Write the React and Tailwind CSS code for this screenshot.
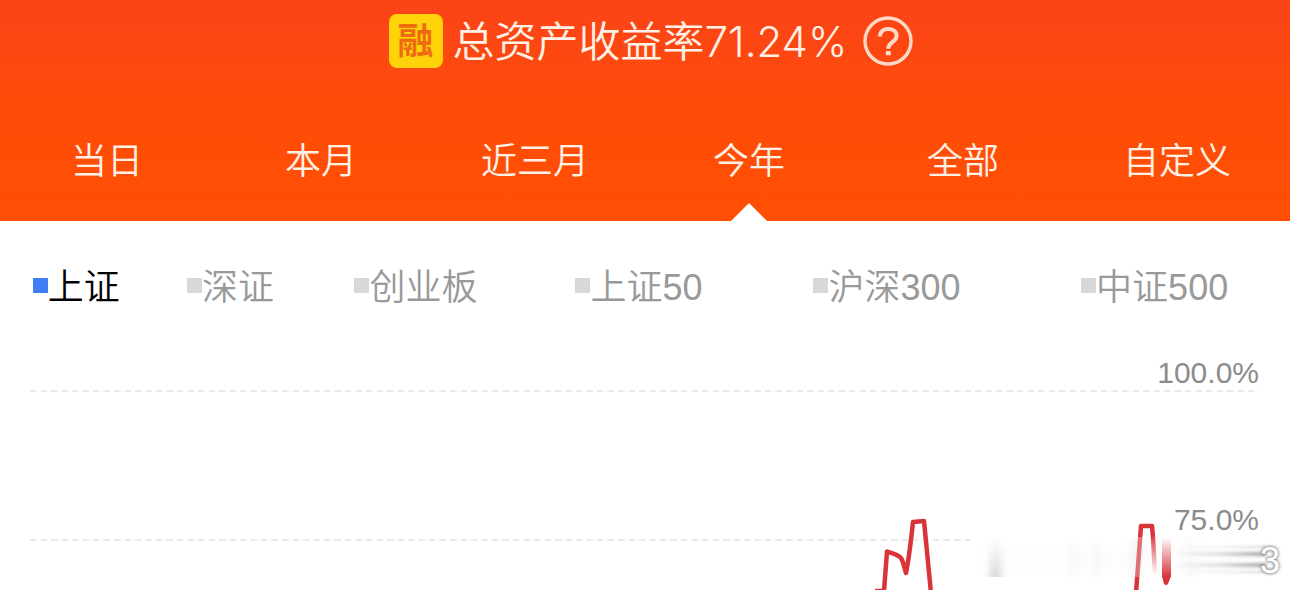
import { useState } from 'react';

const periods = ['当日', '本月', '近三月', '今年', '全部', '自定义'];

// Longer names take a larger share of the row
const indexes = [
  { name: '上证', grow: 'grow-[65]' },
  { name: '深证', grow: 'grow-[69]' },
  { name: '创业板', grow: 'grow-[91]' },
  { name: '上证50', grow: 'grow-[104]' },
  { name: '沪深300', grow: 'grow-[117]' },
  { name: '中证500', grow: 'grow-[123]' },
];

function HelpIcon() {
  return (
    <svg className="w-[50px] h-[50px]" viewBox="0 0 50 50" fill="none" stroke="#ffd9c6" aria-hidden="true">
      <circle cx="25" cy="25" r="23" strokeWidth="3.4" />
      <path d="M17 20.5C17 15.5 20.5 13 25.3 13C30.2 13 33.6 15.7 33.6 19.8C33.6 23 31.8 24.6 29.2 26.4C26.6 28.2 25.3 29.4 25.3 32.8" strokeWidth="4" />
      <path d="M25.3 35V39.3" strokeWidth="5" />
    </svg>
  );
}

function YieldChart() {
  return (
    <svg className="block w-full h-auto" viewBox="0 0 1290 237" role="img" aria-label="收益率走势">
      <defs>
        <linearGradient id="fadeDown" x1="0" y1="0" x2="0" y2="1">
          <stop offset="0" stopColor="#d8343a" stopOpacity="0" />
          <stop offset="1" stopColor="#d8343a" />
        </linearGradient>
        <linearGradient id="fadeUp" gradientUnits="userSpaceOnUse" x1="0" y1="180" x2="0" y2="222">
          <stop offset="0" stopColor="#d8343a" />
          <stop offset="1" stopColor="#d8343a" stopOpacity="0" />
        </linearGradient>
        <linearGradient id="shade" x1="0" y1="0" x2="0" y2="1">
          <stop offset="0" stopColor="#999" stopOpacity="0" />
          <stop offset="1" stopColor="#999" stopOpacity="0.5" />
        </linearGradient>
        <linearGradient id="streak" x1="0" y1="0" x2="1" y2="0">
          <stop offset="0" stopColor="#888" stopOpacity="0" />
          <stop offset="0.5" stopColor="#888" stopOpacity="0.25" />
          <stop offset="1" stopColor="#888" stopOpacity="0.75" />
        </linearGradient>
        <filter id="soft" x="-50%" y="-50%" width="200%" height="200%">
          <feGaussianBlur stdDeviation="1.5" />
        </filter>
        <filter id="softWide" x="-100%" y="-10%" width="300%" height="120%">
          <feGaussianBlur stdDeviation="4 0" />
        </filter>
      </defs>

      {/* Grid lines */}
      <g stroke="#e3e3e3" strokeWidth="1.5" strokeDasharray="6.5 4">
        <path d="M30 38H1259" />
        <path d="M30 187H972" />
      </g>

      <g fill="#8c8c8c" fontSize="30" fontFamily='"Liberation Sans", sans-serif' textAnchor="end">
        <text x="1259" y="30">100.0%</text>
        <text x="1259" y="177">75.0%</text>
      </g>

      {/* Account series */}
      <g fill="none" stroke="#d8343a" strokeWidth="4.5" strokeLinejoin="round">
        <path d="M875 238H884L887 198.500C892 200.500 897 201 901 205C904 210 904.500 216 906 220C909 205 911 188 913 169L924 168L931 240" />
        <path d="M1136 240L1141 173H1152L1153 184" />
        <path d="M1153 184L1155 222" stroke="url(#fadeUp)" />
      </g>
      <rect x="1130" y="184" width="16" height="40" fill="#fff" fillOpacity="0.3" />
      <rect x="1162" y="184" width="9" height="40" fill="url(#fadeDown)" />
      <path d="M1162 223H1171L1168 231Q1166 233 1164 231Z" fill="#d8343a" />

      {/* Smudged strip */}
      <rect x="991" y="184" width="9" height="40" fill="url(#shade)" filter="url(#softWide)" />
      <g fill="#777" fillOpacity="0.06" filter="url(#softWide)">
        <rect x="1071" y="190" width="5" height="34" />
        <rect x="1094" y="190" width="6" height="34" />
        <rect x="1130" y="184" width="12" height="40" />
        <rect x="1188" y="184" width="5" height="40" />
      </g>
      <rect x="1000" y="196" width="262" height="22" fill="#999" fillOpacity="0.02" filter="url(#soft)" />
      <g fill="url(#streak)" filter="url(#soft)">
        <rect x="1172" y="193" width="94" height="2" fillOpacity="0.5" />
        <rect x="1172" y="199" width="94" height="4" />
        <rect x="1172" y="210" width="94" height="4" />
        <rect x="1172" y="218" width="94" height="2" fillOpacity="0.5" />
      </g>
      <g fontSize="36" fontFamily='"Liberation Sans", sans-serif' textAnchor="middle">
        <text x="1270" y="220" fill="#888" stroke="#888" strokeWidth="2" filter="url(#soft)">3</text>
        <text x="1270" y="220" fill="#fff">3</text>
      </g>
    </svg>
  );
}

export default function App() {
  const [period, setPeriod] = useState('今年');
  const [active, setActive] = useState('上证');

  return (
    <main className="bg-white overflow-hidden font-[350] font-['Liberation_Sans','Noto_Sans_CJK_SC',sans-serif]">
      <header className="bg-linear-to-b from-[#fb4317] via-[#ff4c08] to-[#ff4f03] text-[#fff1e6]">
        {/* --- TITLE --- */}
        <div className="flex items-center justify-center pt-3.5 pl-3">
          <span className="flex items-center justify-center w-[54px] h-[54px] pt-0.5 mr-2.5 rounded-lg bg-[#ffd20a] text-[#ee6b12] text-[36px] leading-none font-bold">融</span>
          <h1 className="pt-0.5 text-[42px] leading-none font-['Inter','Noto_Sans_CJK_SC',sans-serif]">总资产收益率71.24%</h1>
          <button type="button" aria-label="收益率说明" className="ml-4">
            <HelpIcon />
          </button>
        </div>

        {/* --- PERIOD TABS --- */}
        <nav className="grid grid-cols-6 mt-[33px] pr-1.5 text-[36px] leading-none">
          {periods.map((item) => (
            <button
              key={item}
              type="button"
              aria-pressed={item === period}
              onClick={() => setPeriod(item)}
              className="relative h-[120px] pt-0.5"
            >
              {item}
              {item === period && (
                <svg className="absolute bottom-0 left-1/2 -translate-x-1/2 w-9 h-[18px]" viewBox="0 0 36 18" fill="#fff" aria-hidden="true">
                  <path d="M0 18L18 0L36 18Z" />
                </svg>
              )}
            </button>
          ))}
        </nav>
      </header>

      {/* --- INDEX LEGEND --- */}
      <div className="flex h-[132px] text-[36px] leading-none">
        {indexes.map(({ name, grow }) => (
          <button
            key={name}
            type="button"
            aria-pressed={name === active}
            onClick={() => setActive(name)}
            className={`${grow} flex items-center justify-center pt-0.5 whitespace-nowrap ${name === active ? 'text-black' : 'text-[#999]'}`}
          >
            <span className={`w-[15px] h-[15px] mb-1.5 ${name === active ? 'bg-[#3f7ef5]' : 'bg-[#d8d8d8]'}`} />
            {name}
          </button>
        ))}
      </div>

      <YieldChart />
    </main>
  );
}
